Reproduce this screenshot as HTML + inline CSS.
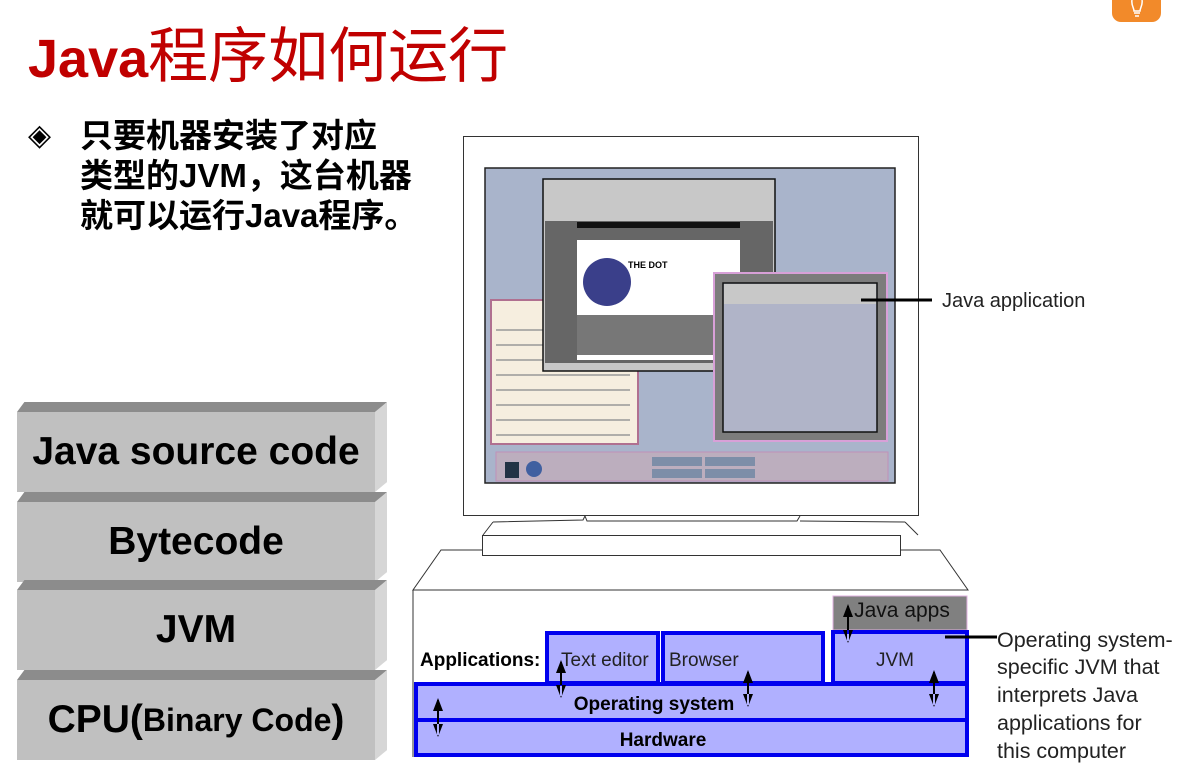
<!DOCTYPE html>
<html><head><meta charset="utf-8"><style>
html,body{margin:0;padding:0;background:#fff;width:1186px;height:770px;overflow:hidden;position:relative;font-family:"Liberation Sans","Noto Sans CJK SC",sans-serif}
.t{position:absolute;white-space:nowrap}
.blk{position:absolute;left:17px;width:370px;height:90px}
.blk .top{position:absolute;left:0;top:0;width:370px;height:10px;background:#8c8c8c;clip-path:polygon(2% 0,100% 0,97% 100%,0 100%)}
.blk .face{position:absolute;left:0;top:10px;width:358px;height:80px;background:#c0c0c0;display:flex;align-items:center;justify-content:center;font-weight:bold;font-size:39px;color:#000}
.blk .side{position:absolute;left:358px;top:0;width:12px;height:90px;background:#d6d6d6;clip-path:polygon(0 11%,100% 0,100% 89%,0 100%)}
</style></head><body>
<div class="t" style="left:28px;top:8px;font-size:54px;font-weight:bold;color:#c00000;">Java<span style="font-weight:normal;font-size:60px;font-family:'Noto Sans CJK SC',sans-serif">程序如何运行</span></div>
<div style="position:absolute;left:1112px;top:-10px;width:49px;height:32px;background:#f28a2a;border-radius:9px"></div>
<svg width="20" height="20" style="position:absolute;left:1127px;top:0" viewBox="0 0 20 20"><path d="M5,0 C4,5 7,8 7,11 L13,11 C13,8 16,5 15,0 M7,13 L13,13 M8,16 L12,16" fill="none" stroke="#fff" stroke-width="1.5"/></svg>
<div class="t" style="left:28px;top:118px;font-size:30px;font-family:'DejaVu Sans',sans-serif">◈</div>
<div class="t" style="left:80px;top:116px;font-size:33px;font-weight:bold;line-height:40px;color:#000">只要机器安装了对应<br>类型的JVM，这台机器<br>就可以运行Java程序。</div>

<div class="blk" style="top:402px"><div class="top"></div><div class="face">Java source code</div><div class="side"></div></div>
<div class="blk" style="top:492px"><div class="top"></div><div class="face">Bytecode</div><div class="side"></div></div>
<div class="blk" style="top:580px"><div class="top"></div><div class="face">JVM</div><div class="side"></div></div>
<div class="blk" style="top:670px"><div class="top"></div><div class="face">CPU(<span style="font-size:32px">Binary Code</span>)</div><div class="side"></div></div>

<svg width="1186" height="770" style="position:absolute;left:0;top:0" xmlns="http://www.w3.org/2000/svg" font-family="Liberation Sans, sans-serif">
<rect x="463.5" y="136.5" width="455" height="379" fill="#fff" stroke="#333"/>
<rect x="485" y="168" width="410" height="315" fill="#a9b4cb" stroke="#222" stroke-width="1.5"/>
<rect x="491" y="300" width="147" height="144" fill="#f6eedf" stroke="#b07090" stroke-width="2"/>
<g stroke="#999" stroke-width="1.5">
<line x1="496" y1="330" x2="630" y2="330"/><line x1="496" y1="345" x2="630" y2="345"/><line x1="496" y1="360" x2="630" y2="360"/><line x1="496" y1="375" x2="630" y2="375"/><line x1="496" y1="390" x2="630" y2="390"/><line x1="496" y1="405" x2="630" y2="405"/><line x1="496" y1="420" x2="630" y2="420"/><line x1="496" y1="435" x2="630" y2="435"/></g>
<rect x="543" y="179" width="232" height="192" fill="#c8c8c8" stroke="#111" stroke-width="1.5"/>
<rect x="545" y="221" width="228" height="142" fill="#666"/>
<rect x="577" y="240" width="163" height="120" fill="#fff"/>
<rect x="577" y="222" width="163" height="6" fill="#111"/>
<circle cx="607" cy="282" r="24" fill="#3a3f8a"/>
<text x="628" y="268" font-size="9" font-weight="bold">THE DOT</text>
<rect x="577" y="315" width="163" height="40" fill="#777"/>
<rect x="714" y="273" width="173" height="168" fill="#7c7c7c" stroke="#d8a0d8" stroke-width="2"/>
<rect x="723" y="283" width="154" height="149" fill="#b0b4c8" stroke="#111" stroke-width="1.5"/>
<rect x="724" y="284" width="152" height="20" fill="#c8c8c8"/>
<rect x="496" y="452" width="392" height="29" fill="#bcaebe" stroke="#c090b8"/>
<rect x="652" y="457" width="50" height="9" fill="#7d8ea8"/><rect x="705" y="457" width="50" height="9" fill="#7d8ea8"/>
<rect x="652" y="469" width="50" height="9" fill="#7d8ea8"/><rect x="705" y="469" width="50" height="9" fill="#7d8ea8"/>
<circle cx="534" cy="469" r="8" fill="#4060a0"/><rect x="505" y="462" width="14" height="16" fill="#234"/>
<line x1="861" y1="300" x2="932" y2="300" stroke="#000" stroke-width="3"/>
<text x="942" y="307" font-size="20" fill="#222">Java application</text>
<path d="M493,522 L583,520 L585,516 M585,516 L587,521 L797,521 L800,516 M800,521 L905,522" fill="none" stroke="#333"/>
<path d="M493,522 L483,535 M905,522 L918,535" fill="none" stroke="#333"/>
<rect x="482.5" y="535.5" width="418" height="20" fill="#fff" stroke="#333"/>
<path d="M482,550 L441,550 L413,590 L968,590 L940,550 L900,550" fill="none" stroke="#333"/>
<line x1="413" y1="590" x2="413" y2="757" stroke="#333"/>
<rect x="833" y="596" width="134" height="34" fill="#808080" stroke="#e0b0e0"/>
<text x="902" y="617" font-size="21" text-anchor="middle" fill="#111">Java apps</text>
<g fill="#b0b0ff" stroke="#0000ee" stroke-width="4">
<rect x="547" y="633" width="111" height="50"/>
<rect x="663" y="633" width="160" height="50"/>
<rect x="833" y="632" width="134" height="51"/>
<rect x="416" y="684" width="551" height="36"/>
<rect x="416" y="720" width="551" height="35"/>
</g>
<text x="420" y="666" font-size="19" font-weight="bold">Applications:</text>
<text x="561" y="666" font-size="19" fill="#222">Text editor</text>
<text x="669" y="666" font-size="19" fill="#222">Browser</text>
<text x="895" y="666" font-size="19" text-anchor="middle" fill="#222">JVM</text>
<text x="654" y="710" font-size="19" font-weight="bold" text-anchor="middle">Operating system</text>
<text x="663" y="746" font-size="19" font-weight="bold" text-anchor="middle">Hardware</text>
<g fill="#000">
<path d="M560,662 h2 v34 h-2 z M556,673 L561,660 L566,673 Z M556,685 L561,698 L566,685 Z"/>
<path d="M747,672 h2 v33 h-2 z M743,683 L748,670 L753,683 Z M743,694 L748,707 L753,694 Z"/>
<path d="M933,672 h2 v33 h-2 z M929,683 L934,670 L939,683 Z M929,694 L934,707 L939,694 Z"/>
<path d="M437,700 h2 v35 h-2 z M433,711 L438,698 L443,711 Z M433,724 L438,737 L443,724 Z"/>
<path d="M847,606 h2 v35 h-2 z M843,617 L848,604 L853,617 Z M843,630 L848,643 L853,630 Z"/>
</g>
<line x1="945" y1="637" x2="997" y2="637" stroke="#000" stroke-width="3"/>
<g font-size="21.5" fill="#222"><text x="997" y="647">Operating system-</text><text x="997" y="674">specific JVM that</text><text x="997" y="702">interprets Java</text><text x="997" y="730">applications for</text><text x="997" y="758">this computer</text></g>
</svg>
</body></html>
